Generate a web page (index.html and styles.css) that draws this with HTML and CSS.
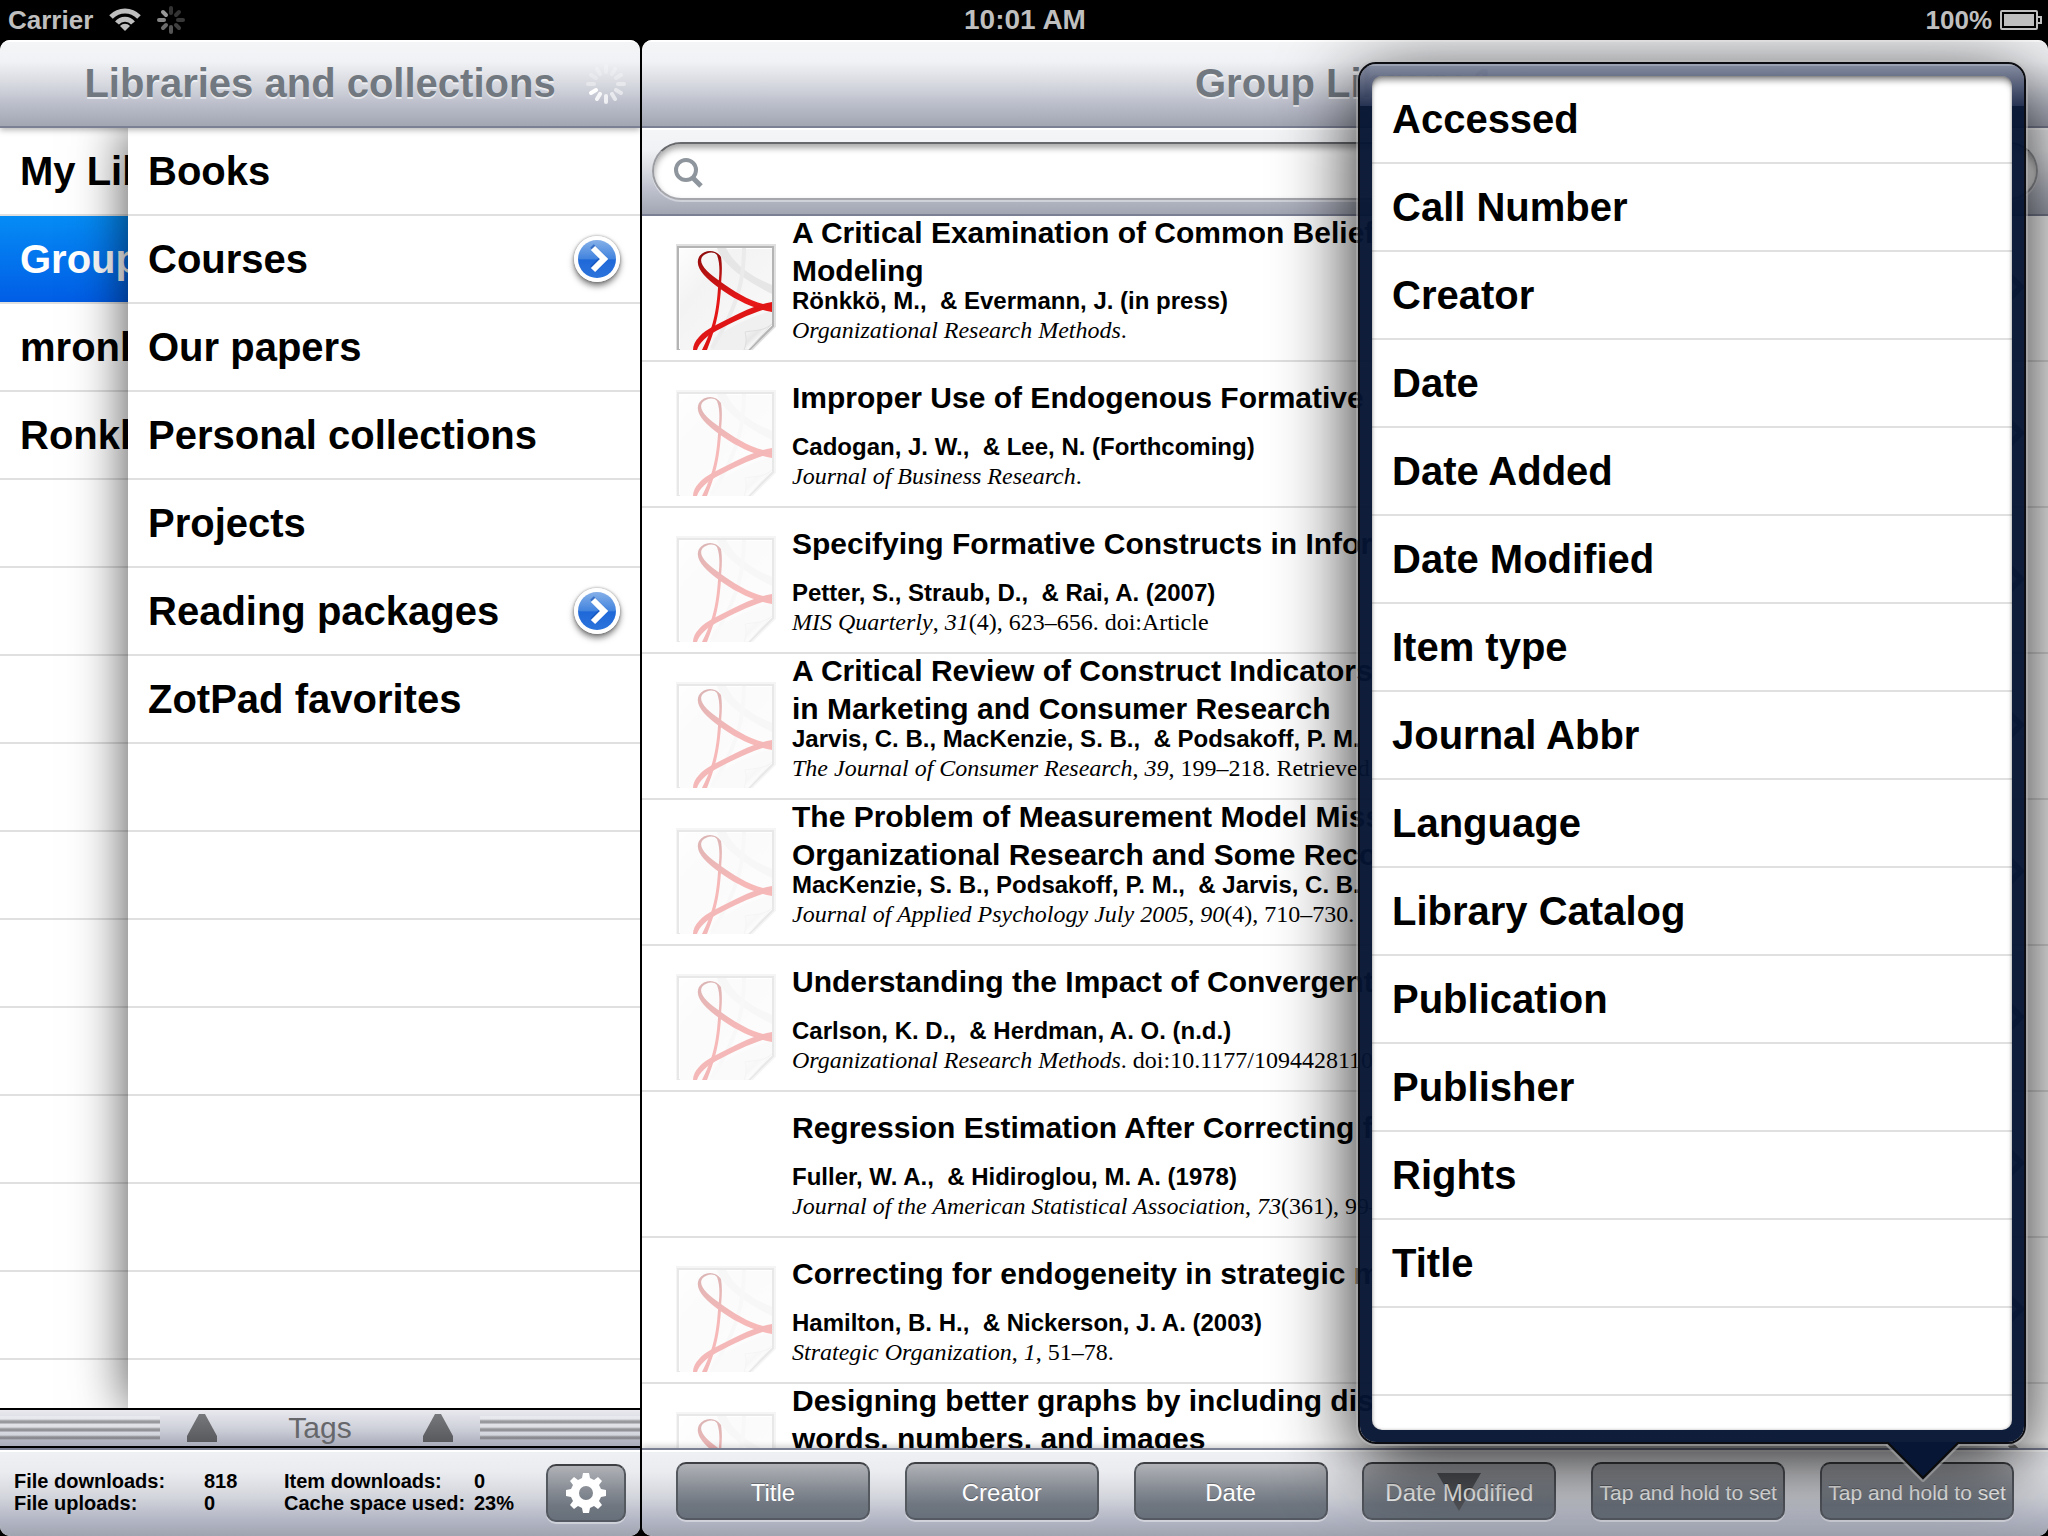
FILE: index.html
```html
<!DOCTYPE html>
<html lang="en">
<head>
<meta charset="utf-8">
<meta name="viewport" content="width=device-width, initial-scale=1">
<title>ZotPad</title>
<link rel="stylesheet" href="styles.css">
</head>
<body>
<svg class="defs" aria-hidden="true">
  <defs>
    <linearGradient id="page" x1="0" y1="0" x2="1" y2="1"><stop offset="0" stop-color="#fdfdfd"/><stop offset=".3" stop-color="#f3f3f3"/><stop offset="1" stop-color="#fafafa"/></linearGradient>
    <linearGradient id="ribbon" x1="0" y1="0" x2="0" y2="1"><stop offset="0" stop-color="#8e0c0c"/><stop offset=".5" stop-color="#e81818"/><stop offset="1" stop-color="#dc1414"/></linearGradient>
    <linearGradient id="curl" x1="0" y1="0" x2="1" y2="1"><stop offset="0" stop-color="#fff"/><stop offset=".4" stop-color="#e6e6e6"/><stop offset=".6" stop-color="#fff"/></linearGradient>
    <linearGradient id="blue" x1="0" y1="0" x2="0" y2="1"><stop offset="0" stop-color="#86b0e8"/><stop offset=".5" stop-color="#4183de"/><stop offset=".52" stop-color="#1f68d8"/><stop offset="1" stop-color="#2b74dc"/></linearGradient>
    <linearGradient id="tri" x1="0" y1="0" x2="0" y2="1"><stop offset="0" stop-color="#77787b"/><stop offset="1" stop-color="#58595c"/></linearGradient>
  </defs>
  <symbol id="pdf" viewBox="0 0 100 106">
    <path d="M1 106V2H98V82L74 106" fill="none" stroke="#000" stroke-opacity=".12" stroke-width="4"/>
    <path d="M2 106V3H97V82L73 106Z" fill="#fff" stroke="#b4b4b4" stroke-width="2"/>
    <path d="M4 106V5H96V81L72 106Z" fill="url(#page)"/>
    <path d="M41 4C46 20 68 36 96 50V41C74 32 58 20 50 4Z" fill="#e6e6e6"/>
    <path d="M68 4C68 36 62 62 36 104" fill="none" stroke="#ebebeb" stroke-width="4"/>
    <path d="M96 67C76 72 56 82 38 94L34 106H68L96 80Z" fill="#ececec" opacity=".7"/>
    <path d="M96 80C88 87 80 86 69 88C71 95 70 101 68 106H72Z" fill="url(#curl)" stroke="#dedede"/>
    <path d="M45 13C47 26 45 34 45 44C43 74 38 88 31 106H26C35 88 40 74 42 44C43 34 45 22 41 11C38 7 30 8 26 13C22 20 32 29 45 38C59 48 76 59 96 62V68C74 64 57 54 43 44C29 34 18 23 23 13C28 5 40 5 45 13Z" fill="url(#ribbon)"/>
    <path d="M96 58C78 61 62 70 38 82C26 88 17 97 17 106H21C23 99 31 92 40 87C60 76 78 68 96 63Z" fill="#e01616"/>
  </symbol>
  <symbol id="disclosure" viewBox="0 0 46 46">
    <circle cx="23" cy="23" r="23" fill="#fff"/>
    <circle cx="23" cy="23" r="19" fill="url(#blue)"/>
    <path d="M19 12L30 23L19 34" fill="none" stroke="#1450b4" stroke-opacity=".6" stroke-width="5" transform="translate(-1 -2)"/>
    <path d="M19 12L30 23L19 34" fill="none" stroke="#fff" stroke-width="6"/>
  </symbol>
  <symbol id="chevron" viewBox="0 0 20 26"><path d="M4 2L15 13L4 24" fill="none" stroke="#7f7f7f" stroke-width="6"/></symbol>
  <symbol id="up" viewBox="0 0 30 28"><path d="M12 0H18L30 22V28H0V22Z" fill="url(#tri)"/></symbol>
</svg>

<header class="status">
  <div class="status-side">
    <span>Carrier</span>
    <svg width="32" height="24" viewBox="0 0 32 24" fill="none" stroke="#bfbfbf" stroke-width="5"><path d="M2 9C10 1 22 1 30 9"/><path d="M8 15C12 10 20 10 24 15"/><path d="M16 23L11 18C14 15 18 15 21 18Z" fill="#bfbfbf" stroke="none"/></svg>
    <svg class="status-spin" width="28" height="28" viewBox="-14 -14 28 28" stroke-width="4" stroke-linecap="round"><path d="M0-7V-12" stroke="#333"/><path d="M5-5L8-8" stroke="#333"/><path d="M7 0H12" stroke="#383838"/><path d="M5 5L8 8" stroke="#404040"/><path d="M0 7V12" stroke="#555"/><path d="M-5 5L-8 8" stroke="#6c6c6c"/><path d="M-7 0H-12" stroke="#858585"/><path d="M-5-5L-8-8" stroke="#999"/></svg>
  </div>
  <time class="clock">10:01 AM</time>
  <div class="status-side status-right">
    <span>100%</span>
    <svg width="42" height="20" viewBox="0 0 42 20"><rect x="1" y="1" width="36" height="18" rx="1" fill="none" stroke="#bfbfbf" stroke-width="2"/><rect x="4" y="4" width="30" height="12" fill="#bfbfbf"/><path d="M38 7H41V13H38" fill="none" stroke="#bfbfbf" stroke-width="2"/></svg>
  </div>
</header>

<main class="split">
  <section class="pane master">
    <div class="navbar">
      <h1>Libraries and collections</h1>
      <svg class="nav-spin" width="40" height="40" viewBox="-20 -20 40 40" stroke="#fff" stroke-width="4" stroke-linecap="round"><path d="M0-12V-18" opacity=".25"/><path d="M6-10L9-15" opacity=".25"/><path d="M10-6L15-9" opacity=".3"/><path d="M12 0H18" opacity=".4"/><path d="M10 6L15 9" opacity=".5"/><path d="M6 10L9 15" opacity=".6"/><path d="M0 12V18" opacity=".75"/><path d="M-6 10L-9 15" opacity=".85"/><path d="M-10 6L-15 9"/><path d="M-12 0H-18" opacity=".35"/><path d="M-10-6L-15-9" opacity=".25"/><path d="M-6-10L-9-15" opacity=".25"/></svg>
    </div>
    <div class="stack">
      <ul class="rows libraries">
        <li><button class="row">My Library</button></li>
        <li><button class="row selected">Group</button></li>
        <li><button class="row">mronkko</button></li>
        <li><button class="row">Ronkko</button></li>
      </ul>
      <ul class="rows collections">
        <li><button class="row">Books</button></li>
        <li><button class="row">Courses</button><button class="more" aria-label="Open Courses"><svg width="46" height="46"><use href="#disclosure"/></svg></button></li>
        <li><button class="row">Our papers</button></li>
        <li><button class="row">Personal collections</button></li>
        <li><button class="row">Projects</button></li>
        <li><button class="row">Reading packages</button><button class="more" aria-label="Open Reading packages"><svg width="46" height="46"><use href="#disclosure"/></svg></button></li>
        <li><button class="row">ZotPad favorites</button></li>
      </ul>
    </div>
    <div class="tags">
      <span class="grip"></span>
      <svg width="30" height="28"><use href="#up"/></svg>
      <span class="tags-label">Tags</span>
      <svg width="30" height="28"><use href="#up"/></svg>
      <span class="grip"></span>
    </div>
    <footer class="toolbar stats">
      <dl>
        <dt>File downloads:</dt><dd>818</dd><dt>Item downloads:</dt><dd>0</dd>
        <dt>File uploads:</dt><dd>0</dd><dt>Cache space used:</dt><dd>23%</dd>
      </dl>
      <button class="tool gear" aria-label="Settings"><svg width="40" height="42" viewBox="-20 -21 40 42"><path fill="#fff" fill-rule="evenodd" d="M-4-15L-3-20H3L4-15L8-13L12-16L16-12L13-8L15-4L20-3V3L15 4L13 8L16 12L12 16L8 13L4 15L3 20H-3L-4 15L-8 13L-12 16L-16 12L-13 8L-15 4L-20 3V-3L-15-4L-13-8L-16-12L-12-16L-8-13ZM7 0A7 7 0 1 0-7 0A7 7 0 1 0 7 0Z"/></svg></button>
    </footer>
  </section>

  <section class="pane detail">
    <div class="navbar"><h2>Group Library 1</h2></div>
    <div class="searchbar">
      <label class="search"><svg width="30" height="30" viewBox="0 0 30 30" fill="none" stroke="#8e959c" stroke-width="4"><circle cx="12" cy="12" r="10"/><path d="M18 19L27 28" stroke-width="5"/></svg><input type="search" aria-label="Search"></label>
    </div>
    <ul class="papers">
      <li><svg class="thumb"><use href="#pdf"/></svg><div class="paper"><h3><span>A Critical Examination of Common Beliefs<br>Modeling</span></h3><p class="who">Rönkkö, M.,&nbsp; &amp; Evermann, J. (in press)</p><p class="src"><i>Organizational Research Methods</i>.</p></div><svg class="chev"><use href="#chevron"/></svg></li>
      <li><svg class="thumb remote"><use href="#pdf"/></svg><div class="paper"><h3><span>Improper Use of Endogenous Formative</span></h3><p class="who">Cadogan, J. W.,&nbsp; &amp; Lee, N. (Forthcoming)</p><p class="src"><i>Journal of Business Research</i>.</p></div><svg class="chev"><use href="#chevron"/></svg></li>
      <li><svg class="thumb remote"><use href="#pdf"/></svg><div class="paper"><h3><span>Specifying Formative Constructs in Infor</span></h3><p class="who">Petter, S., Straub, D.,&nbsp; &amp; Rai, A. (2007)</p><p class="src"><i>MIS Quarterly</i>, <i>31</i>(4), 623–656. doi:Article</p></div><svg class="chev"><use href="#chevron"/></svg></li>
      <li><svg class="thumb remote"><use href="#pdf"/></svg><div class="paper"><h3><span>A Critical Review of Construct Indicators<br>in Marketing and Consumer Research</span></h3><p class="who">Jarvis, C. B., MacKenzie, S. B.,&nbsp; &amp; Podsakoff, P. M.</p><p class="src"><i>The Journal of Consumer Research</i>, <i>39</i>, 199–218. Retrieved</p></div><svg class="chev"><use href="#chevron"/></svg></li>
      <li><svg class="thumb remote"><use href="#pdf"/></svg><div class="paper"><h3><span>The Problem of Measurement Model Miss<br>Organizational Research and Some Reco</span></h3><p class="who">MacKenzie, S. B., Podsakoff, P. M.,&nbsp; &amp; Jarvis, C. B.</p><p class="src"><i>Journal of Applied Psychology July 2005</i>, <i>90</i>(4), 710–730.</p></div><svg class="chev"><use href="#chevron"/></svg></li>
      <li><svg class="thumb remote"><use href="#pdf"/></svg><div class="paper"><h3><span>Understanding the Impact of Convergent</span></h3><p class="who">Carlson, K. D.,&nbsp; &amp; Herdman, A. O. (n.d.)</p><p class="src"><i>Organizational Research Methods</i>. doi:10.1177/10944281103</p></div><svg class="chev"><use href="#chevron"/></svg></li>
      <li><span class="thumb"></span><div class="paper"><h3><span>Regression Estimation After Correcting f</span></h3><p class="who">Fuller, W. A.,&nbsp; &amp; Hidiroglou, M. A. (1978)</p><p class="src"><i>Journal of the American Statistical Association</i>, <i>73</i>(361), 99–</p></div><svg class="chev"><use href="#chevron"/></svg></li>
      <li><svg class="thumb remote"><use href="#pdf"/></svg><div class="paper"><h3><span>Correcting for endogeneity in strategic m</span></h3><p class="who">Hamilton, B. H.,&nbsp; &amp; Nickerson, J. A. (2003)</p><p class="src"><i>Strategic Organization</i>, <i>1</i>, 51–78.</p></div><svg class="chev"><use href="#chevron"/></svg></li>
      <li><svg class="thumb remote"><use href="#pdf"/></svg><div class="paper"><h3><span>Designing better graphs by including dist<br>words, numbers, and images</span></h3></div><svg class="chev"><use href="#chevron"/></svg></li>
    </ul>
    <footer class="toolbar sorts">
      <button class="tool">Title</button>
      <button class="tool">Creator</button>
      <button class="tool">Date</button>
      <button class="tool sorted"><svg width="44" height="38" viewBox="0 0 44 38"><path d="M0 0H44L22 38Z" fill="#55585d"/></svg><span>Date Modified</span></button>
      <button class="tool unset">Tap and hold to set</button>
      <button class="tool unset">Tap and hold to set</button>
    </footer>
    <div class="popover" role="dialog" aria-label="Sort field">
      <ul class="rows fields">
        <li><button class="row">Accessed</button></li>
        <li><button class="row">Call Number</button></li>
        <li><button class="row">Creator</button></li>
        <li><button class="row">Date</button></li>
        <li><button class="row">Date Added</button></li>
        <li><button class="row">Date Modified</button></li>
        <li><button class="row">Item type</button></li>
        <li><button class="row">Journal Abbr</button></li>
        <li><button class="row">Language</button></li>
        <li><button class="row">Library Catalog</button></li>
        <li><button class="row">Publication</button></li>
        <li><button class="row">Publisher</button></li>
        <li><button class="row">Rights</button></li>
        <li><button class="row">Title</button></li>
      </ul>
      <svg class="arrow" width="76" height="40" viewBox="0 0 76 40"><path d="M2 2L38 38L74 2" fill="#071634" stroke="#aaa" stroke-opacity=".6" stroke-width="4"/><path d="M2 0L38 36L74 0" fill="#071634" stroke="#0a0a0a" stroke-width="2"/></svg>
    </div>
  </section>
</main>
</body>
</html>
```

FILE: styles.css
```css
* { box-sizing: border-box; }
body {
  margin: 0;
  height: 100vh;
  display: flex;
  flex-direction: column;
  overflow: hidden;
  background: #000;
  color: #000;
  font-family: "Liberation Sans", Arial, sans-serif;
}
h1, h2, h3, p, ul, dl, dd { margin: 0; padding: 0; }
ul { list-style: none; }
svg { display: block; flex: none; }
button { font: inherit; border: 0; padding: 0; margin: 0; background: none; color: inherit; }
.defs { position: absolute; width: 0; height: 0; }

/* Status bar */
.status {
  flex: none;
  display: flex;
  align-items: center;
  height: 40px;
  padding: 0 6px 0 8px;
  color: #bfbfbf;
  font-size: 26px;
  font-weight: bold;
}
.status-side { flex: 1; display: flex; align-items: center; gap: 16px; }
.status-right { justify-content: flex-end; gap: 8px; }
.clock { font-size: 28px; }

/* Panes */
.split { flex: 1; min-height: 0; display: flex; gap: 2px; }
.pane {
  position: relative;
  display: flex;
  flex-direction: column;
  min-width: 0;
  overflow: hidden;
  border-radius: 10px;
  background: #fff;
}
.master { flex: 0 0 31.25%; }
.detail { flex: 1; }

.navbar, .searchbar {
  flex: none;
  display: flex;
  align-items: center;
  height: 88px;
  border-bottom: 2px solid #7b8095;
  background: linear-gradient(#fff 0 2px, #f4f5f7 2px, #f1f2f5 25%, #d6d8df 52%, #b8bbc8 77%, #a2a6b3);
}
.navbar { position: relative; justify-content: center; }
.master .navbar { z-index: 2; box-shadow: 0 2px 6px rgba(0, 0, 0, .3); }
.navbar h1, .navbar h2 {
  font-size: 40px;
  line-height: 48px;
  color: #717880;
  text-shadow: 0 2px 0 rgba(255, 255, 255, .6);
}
.nav-spin { position: absolute; right: 14px; top: 24px; }

/* Ruled lists */
.rows { background: repeating-linear-gradient(#fff 0 86px, #e0e0e0 86px 88px); }
.rows li { position: relative; height: 88px; padding-bottom: 2px; }
.row {
  display: block;
  width: 100%;
  height: 100%;
  padding: 0 20px;
  font-size: 40px;
  font-weight: bold;
  text-align: left;
  white-space: nowrap;
}
.row.selected { background: linear-gradient(#058cf5, #015de6); color: #fff; }
.stack { flex: 1; min-height: 0; display: flex; overflow: hidden; }
.libraries { flex: 0 0 20%; overflow: hidden; }
.collections { position: relative; flex: 1; box-shadow: 0 0 50px rgba(0, 0, 0, .7); }
.more {
  position: absolute;
  right: 20px;
  top: 20px;
  border-radius: 50%;
  box-shadow: 0 4px 6px rgba(0, 0, 0, .5), 0 0 3px rgba(0, 0, 0, .4);
}

/* Tags drawer */
.tags {
  flex: none;
  display: flex;
  align-items: center;
  justify-content: space-between;
  height: 40px;
  border: solid #000;
  border-width: 2px 0;
  background: linear-gradient(#e9e9ef, #cfd1da 50%, #a9acba);
}
.grip {
  width: 25%;
  height: 24px;
  background: repeating-linear-gradient(rgba(255, 255, 255, .3) 0 3px, rgba(90, 90, 90, .5) 5px 7px, rgba(255, 255, 255, .2) 8px);
}
.tags-label { width: 152px; text-align: center; font-size: 30px; line-height: 36px; color: #66676b; }

/* Bottom bars */
.toolbar {
  flex: none;
  display: flex;
  align-items: center;
  height: 88px;
  border-top: 2px solid #7b8095;
  background: linear-gradient(#fff 0 2px, #eff0f4 2px, #ebecf0 25%, #d3d5dc 55%, #b4b7c5 80%, #a0a4b1);
}
.stats { padding: 0 14px; justify-content: space-between; }
.stats dl {
  display: grid;
  grid-template-columns: 190px 80px 190px 60px;
  padding-bottom: 2px;
  font-size: 20px;
  line-height: 22px;
  font-weight: bold;
  white-space: nowrap;
}
.tool {
  position: relative;
  display: flex;
  align-items: center;
  justify-content: center;
  width: 194px;
  height: 58px;
  border-radius: 10px;
  border: 2px solid #4d5157;
  border-color: #3e4044 #54585f #555a62;
  background: linear-gradient(#b0b2b7, #878c94 45%, #6f7680 75%, #68707b);
  box-shadow: 0 2px 0 rgba(255, 255, 255, .4);
  color: #fff;
  font-size: 24px;
  text-shadow: 0 -1px 0 rgba(0, 0, 0, .3);
  white-space: nowrap;
}
.gear { width: 80px; }
.sorts {
  justify-content: space-between;
  padding: 0 34px 4px;
  box-shadow: 0 -2px 6px rgba(0, 0, 0, .2);
}
.sorts .tool { padding-top: 3px; }
.sorted svg { position: absolute; left: 73px; top: 9px; }
.sorted span { position: relative; }
.unset { font-size: 21px; }

/* Search */
.searchbar { padding: 0 10px; }
.search {
  flex: 1;
  display: flex;
  align-items: center;
  gap: 12px;
  height: 58px;
  padding: 4px 20px 0;
  border: 2px solid #85878c;
  border-color: #66686c #9a9ca1 #a5a7ad;
  border-radius: 29px;
  background: #fff;
  box-shadow: inset 0 4px 6px rgba(0, 0, 0, .35), 0 2px 0 rgba(255, 255, 255, .4);
}
.search input { flex: 1; border: 0; outline: 0; background: none; font: inherit; font-size: 30px; }

/* Items */
.papers { flex: 1; min-height: 0; overflow: hidden; }
.papers li {
  display: flex;
  align-items: flex-start;
  height: 146px;
  padding: 0 22px 0 34px;
  border-bottom: 2px solid #e0e0e0;
}
.thumb { flex: none; width: 100px; height: 106px; margin-top: 28px; }
.remote { opacity: .3; }
.paper { flex: 1; min-width: 0; padding-left: 16px; white-space: nowrap; }
.paper h3 {
  display: flex;
  align-items: center;
  height: 71px;
  font-size: 30px;
  line-height: 38px;
}
.who { font-size: 24px; line-height: 28px; font-weight: bold; }
.src { font-family: "Liberation Serif", "Times New Roman", serif; font-size: 24px; line-height: 31px; }
.chev { width: 20px; height: 26px; margin-top: 58px; }

/* Sort field popover */
.popover {
  position: absolute;
  right: 22px;
  top: 22px;
  width: 668px;
  padding: 12px;
  border: 2px solid #0b0d12;
  border-radius: 18px;
  background: linear-gradient(#9aa2b2 0 2px, rgba(124, 133, 155, .96) 2px, rgba(98, 106, 130, .96) 14px, rgba(32, 45, 77, .96) 42px, rgba(5, 20, 50, .96) 42px);
  background-clip: padding-box;
  box-shadow: 0 0 0 2px rgba(190, 190, 190, .5), 0 20px 80px rgba(0, 0, 0, .9);
}
.fields { position: relative; padding-bottom: 122px; border-radius: 10px; }
.fields::after {
  content: "";
  position: absolute;
  inset: 0;
  border-radius: 10px;
  box-shadow: inset 0 6px 6px -2px rgba(0, 0, 0, .45), inset 0 0 3px rgba(0, 0, 0, .3);
  pointer-events: none;
}
.arrow { position: absolute; right: 63px; top: 100%; }
```
